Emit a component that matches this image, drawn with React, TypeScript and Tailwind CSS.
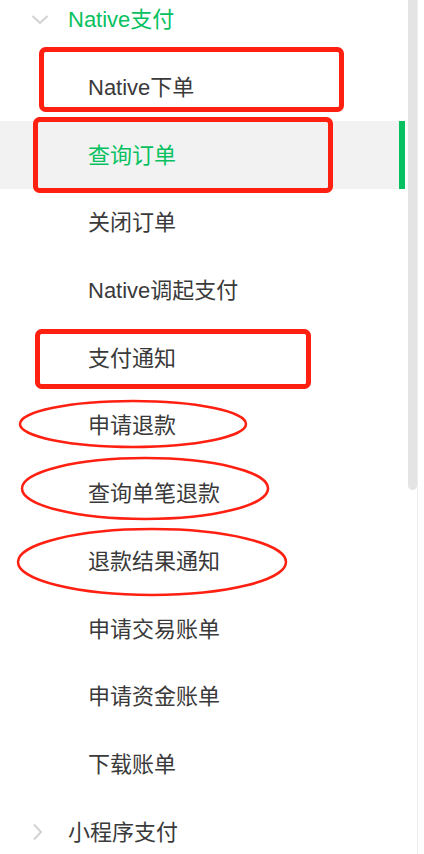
const items = [
  "Native下单",
  "查询订单",
  "关闭订单",
  "Native调起支付",
  "支付通知",
  "申请退款",
  "查询单笔退款",
  "退款结果通知",
  "申请交易账单",
  "申请资金账单",
  "下载账单",
];

const font = { fontFamily: '"Liberation Sans", "Noto Sans CJK SC", sans-serif' };

function Chevron({ down }: { down?: boolean }) {
  return (
    <svg width="16" height="16" viewBox="0 0 16 16" className="text-[#d2d2d2]">
      <path
        d={down ? "M0.5 4 L8 11 L15.5 4" : "M4 0.5 L11 8 L4 15.5"}
        fill="none"
        stroke="currentColor"
        strokeWidth="2"
      />
    </svg>
  );
}

export default function App() {
  return (
    <div className="relative h-[854px] w-[424px] overflow-hidden bg-white" style={font}>
      <div className="flex h-full">
        {/* menu */}
        <div className="-mt-[14px] w-[405px] text-[22px] text-[#3a3a3a]">
          <div className="flex h-[67.7px] items-center">
            <div className="flex w-[68px] justify-end pr-[20px]">
              <Chevron down />
            </div>
            <span className="text-[#07c160]">Native支付</span>
          </div>
          {items.map((t) => {
            const active = t === "查询订单";
            return (
              <div
                key={t}
                className={`flex h-[67.7px] items-center ${active ? "bg-[#f2f2f2]" : ""}`}
              >
                <span className={`flex-1 pl-[88px] ${active ? "text-[#07c160]" : ""}`}>{t}</span>
                {active && <div className="h-full w-[6px] bg-[#07c160]" />}
              </div>
            );
          })}
          <div className="flex h-[67.7px] items-center">
            <div className="flex w-[68px] justify-end pr-[22px]">
              <Chevron />
            </div>
            <span>小程序支付</span>
          </div>
        </div>
        {/* scrollbar */}
        <div className="ml-[3px] flex">
          <div className="h-[490px] w-[9px] rounded-b-full bg-[#e4e4e4]" />
          <div className="h-full w-px bg-[#ececec]" />
        </div>
      </div>

      {/* red annotations */}
      <svg className="pointer-events-none absolute inset-0" width="424" height="854">
        <g fill="none" stroke="#ff2011">
          <rect x="41.5" y="49.5" width="300" height="60" rx="4" strokeWidth="5" />
          <rect x="35.5" y="119.5" width="295" height="71" rx="4" strokeWidth="5" />
          <rect x="37.5" y="331.5" width="271" height="55" rx="4" strokeWidth="5" />
          <ellipse cx="133" cy="424" rx="113" ry="23" strokeWidth="2.5" />
          <ellipse cx="145" cy="488.5" rx="123" ry="30.5" strokeWidth="2.5" />
          <ellipse cx="152" cy="562" rx="134" ry="33" strokeWidth="2.5" />
        </g>
      </svg>
    </div>
  );
}
